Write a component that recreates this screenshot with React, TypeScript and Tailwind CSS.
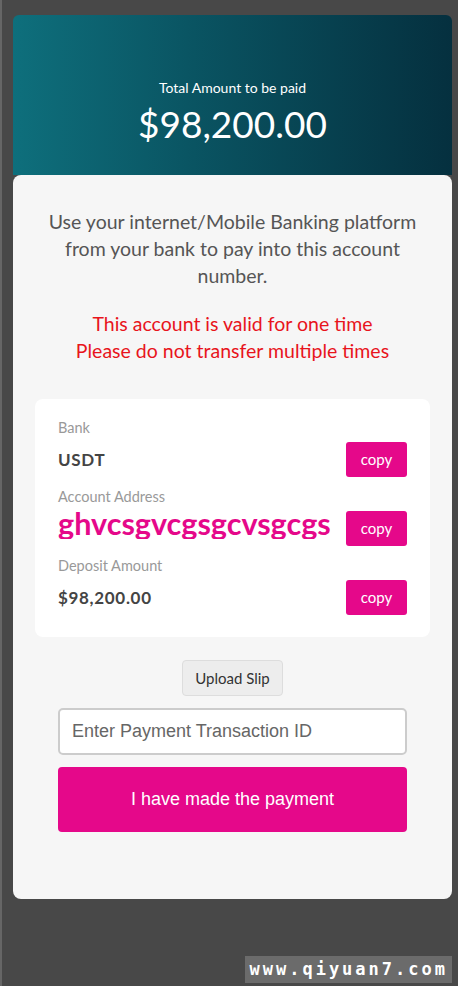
const rows = [
  { label: "Bank", value: "USDT", kind: "plain" },
  { label: "Account Address", value: "ghvcsgvcgsgcvsgcgs", kind: "address" },
  { label: "Deposit Amount", value: "$98,200.00", kind: "plain" },
];

export default function App() {
  return (
    <div className="min-h-screen border-l-2 border-[#666666] bg-[#484848] pl-[11px] pr-[6px] pt-[15px] font-['Lato',sans-serif]">
      {/* шапка с суммой */}
      <div className="flex h-[160px] flex-col items-center justify-end rounded-t-md bg-linear-to-r from-[#0e6f7c] to-[#05303f] pb-[29px] text-white">
        <div className="text-[14px] leading-5">Total Amount to be paid</div>
        <div className="mt-[4px] text-[37px] leading-[44px]">$98,200.00</div>
      </div>

      {/* основная карточка */}
      <div className="rounded-b-lg rounded-t-lg bg-[#f6f6f6] px-[22px] pb-[67px] pt-[33px]">
        <p className="text-center text-[19.5px] leading-[27px] text-[#555]">
          Use your internet/Mobile Banking platform from your bank to pay into this account number.
        </p>

        <p className="mt-[21px] text-center text-[19.5px] leading-[27px] text-[#e8141c]">
          This account is valid for one time
          <br />
          Please do not transfer multiple times
        </p>

        <div className="mt-[35px] flex flex-col gap-[11px] rounded-lg bg-white px-[23px] pb-[22px] pt-[20px]">
          {rows.map((row) => (
            <div key={row.label}>
              <div className="text-[14.5px] leading-[18px] text-[#999]">{row.label}</div>
              <div className="mt-[5px] flex h-[35px] items-start justify-between">
                {row.kind === "address" ? (
                  <div className="mt-[-5px] h-[33px] overflow-hidden text-[30.6px] font-bold leading-[36px] text-[#e5088a]">
                    {row.value}
                  </div>
                ) : (
                  <div className="text-[17px] font-bold leading-[35px] tracking-[0.04em] text-[#444]">{row.value}</div>
                )}
                <button className="h-[35px] w-[61px] rounded-[3px] bg-[#e5088a] text-[15px] text-white">
                  copy
                </button>
              </div>
            </div>
          ))}
        </div>

        <div className="mt-[23px] flex flex-col items-center px-[23px]">
          <button className="h-[36px] w-[101px] rounded-[4px] border border-[#dddddd] bg-[#ededed] text-[15px] text-[#333]">
            Upload Slip
          </button>

          <input
            placeholder="Enter Payment Transaction ID"
            className="mt-[12px] h-[47px] w-full rounded-[5px] border-2 border-[#cccccc] bg-white px-[12px] font-['Liberation_Sans',sans-serif] text-[18px] text-[#333] placeholder:text-[#666]"
          />

          <button className="mt-[12px] h-[65px] w-full rounded-[4px] bg-[#e5088a] font-['Liberation_Sans',sans-serif] text-[18px] text-white">
            I have made the payment
          </button>
        </div>
      </div>

      <div className="mt-[57px] flex justify-end">
        <div className="bg-[#6b6b6b] px-[4px] font-['DejaVu_Sans_Mono',monospace] text-[17px] font-bold leading-[27px] tracking-[3px] text-white">
          www.qiyuan7.com
        </div>
      </div>
    </div>
  );
}
